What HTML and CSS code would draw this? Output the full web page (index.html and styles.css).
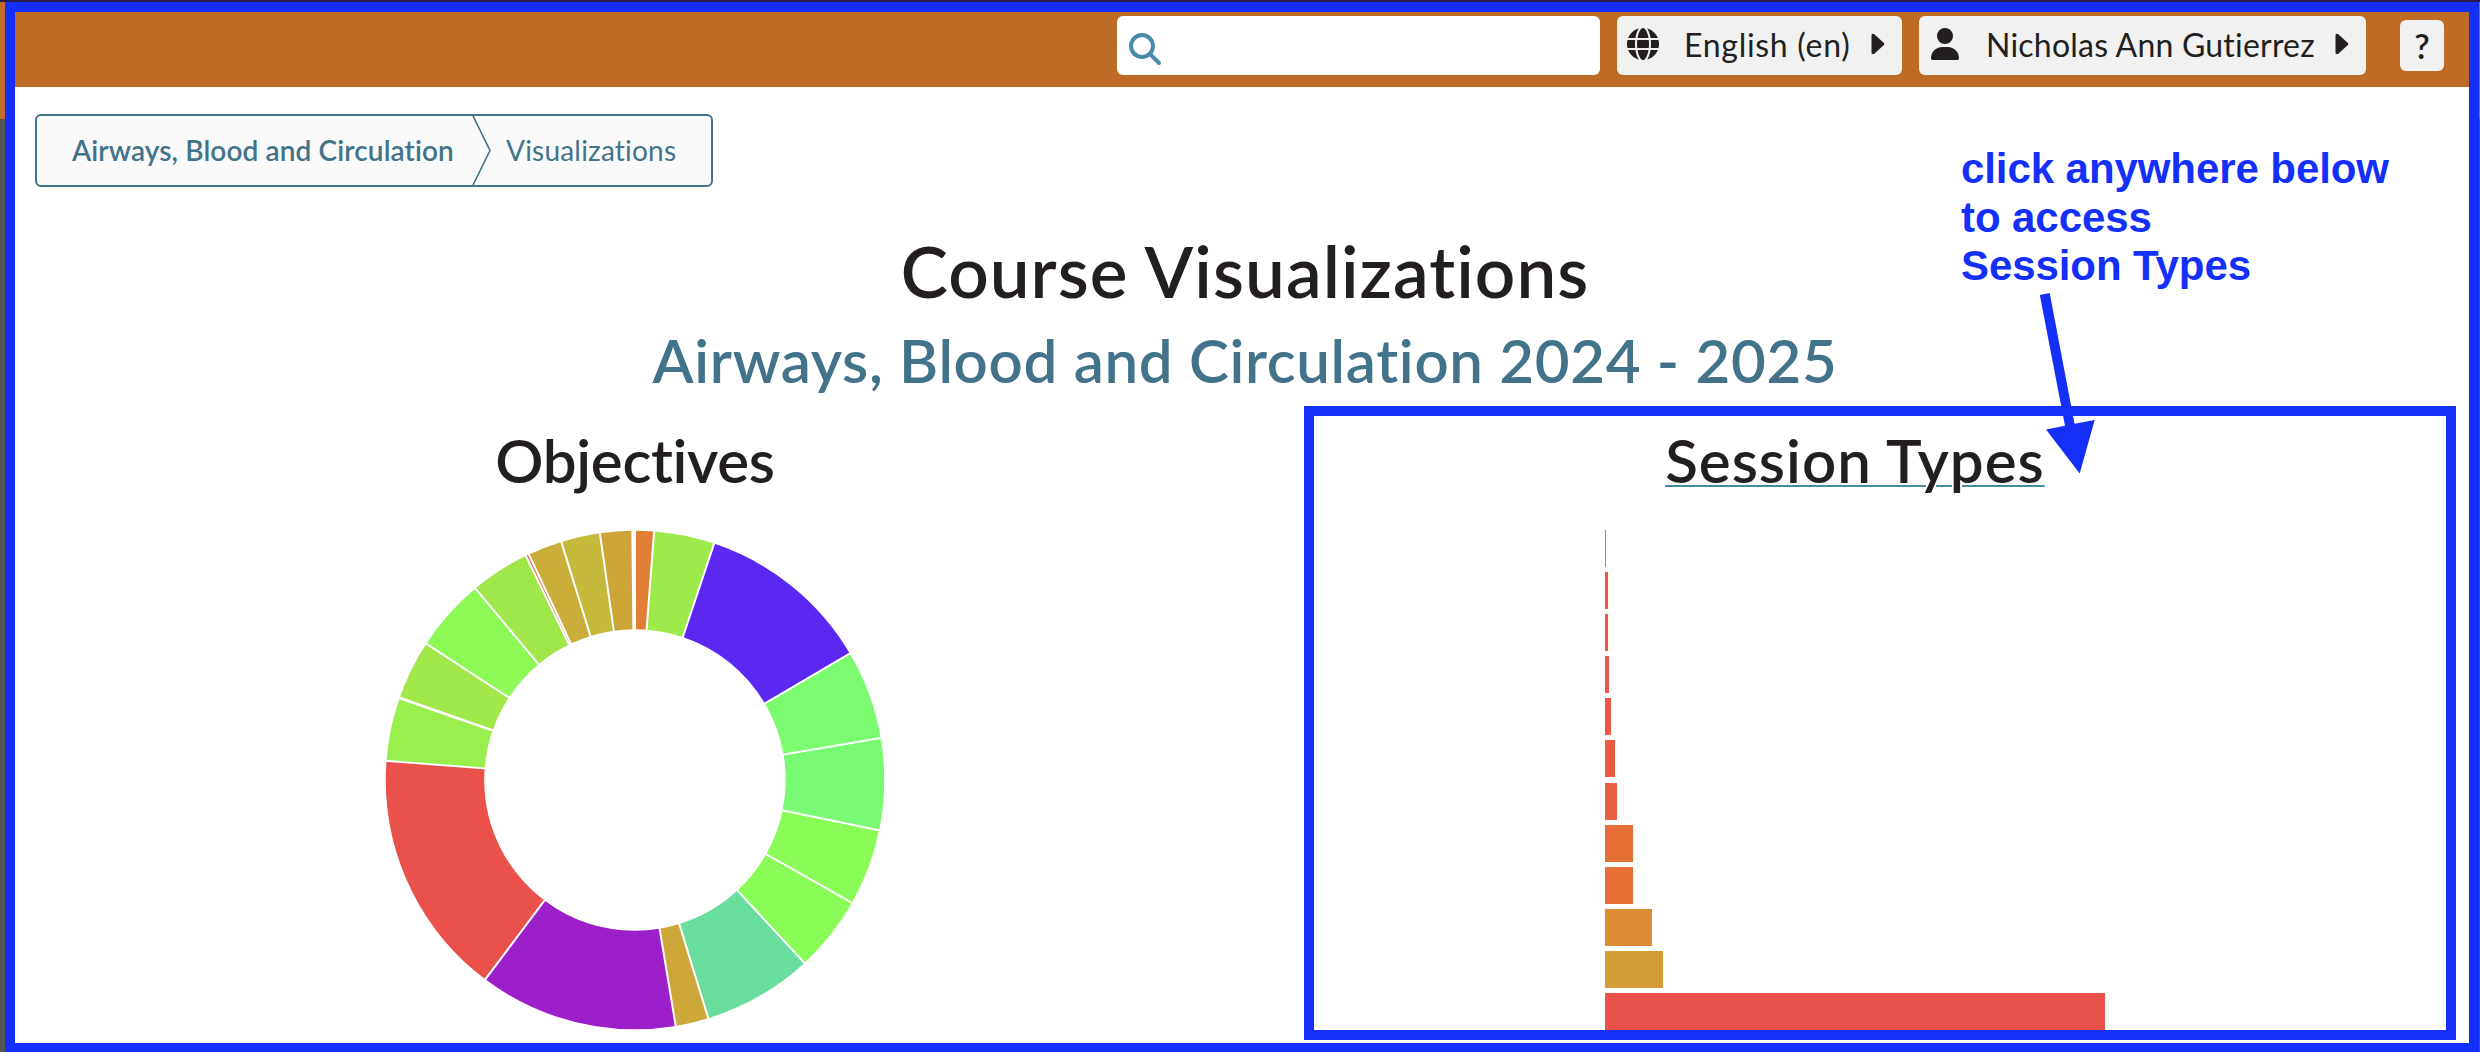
FILE: index.html
```html
<!DOCTYPE html>
<html lang="en">
<head>
<meta charset="utf-8">
<title>Course Visualizations</title>
<link rel="stylesheet" href="styles.css">
</head>
<body>
<div class="window">
<div class="app">
  <header class="topbar">
    <div class="search">
      <svg width="32" height="32" viewBox="0 0 512 512"><path fill="#4a8aa8" d="M416 208c0 45.900-14.900 88.300-40 122.700L502.600 457.400c12.500 12.500 12.500 32.800 0 45.300s-32.800 12.500-45.300 0L330.700 376c-34.400 25.200-76.800 40-122.700 40C93.100 416 0 322.900 0 208S93.100 0 208 0S416 93.100 416 208zM208 352a144 144 0 1 0 0-288 144 144 0 1 0 0 288z"/></svg>
    </div>
    <button class="menu language">
      <svg width="32" height="32" viewBox="0 0 512 512"><path fill="#231f20" d="M352 256c0 22.200-1.200 43.600-3.300 64H163.300c-2.200-20.400-3.300-41.800-3.300-64s1.200-43.600 3.300-64H348.700c2.200 20.400 3.300 41.800 3.300 64zm28.800-64H503.900c5.300 20.500 8.100 41.900 8.100 64s-2.800 43.500-8.100 64H380.800c2.100-20.600 3.200-42 3.200-64s-1.100-43.400-3.200-64zm112.600-32H376.700c-10-63.900-29.800-117.400-55.300-151.600c78.300 20.700 142 77.500 171.900 151.600zm-149.100 0H167.700c6.100-36.400 15.500-68.600 27-94.700c10.500-23.600 22.200-40.700 33.500-51.500C239.400 3.200 248.700 0 256 0s16.600 3.200 27.800 13.800c11.300 10.800 23 27.900 33.500 51.500c11.600 26 20.900 58.200 27 94.700zm-209 0H18.600C48.600 85.900 112.200 29.100 190.600 8.400C165.100 42.600 145.300 96.100 135.300 160zM8.100 192H131.200c-2.100 20.600-3.200 42-3.200 64s1.100 43.400 3.200 64H8.100C2.800 299.500 0 278.100 0 256s2.800-43.500 8.100-64zM194.700 446.600c-11.600-26-20.900-58.200-27-94.600H344.300c-6.100 36.400-15.500 68.600-27 94.600c-10.500 23.600-22.200 40.700-33.500 51.500C272.600 508.800 263.300 512 256 512s-16.600-3.200-27.800-13.800c-11.300-10.800-23-27.900-33.500-51.500zM135.300 352c10 63.900 29.800 117.400 55.300 151.600C112.200 482.900 48.600 426.100 18.600 352H135.300zm358.100 0c-30 74.100-93.600 130.900-171.900 151.600c25.500-34.200 45.200-87.700 55.300-151.600H493.400z"/></svg>
      <span class="label">English (en)</span>
      <svg class="caret" width="14" height="22" viewBox="0 0 14 22"><path fill="#231f20" d="M0.500 2.500C0.500 0.500 2.500 0.300 3.600 1.500L12.600 9.800C13.500 10.700 13.500 11.500 12.600 12.300L3.600 20.500C2.500 21.700 0.500 21.300 0.500 19.500Z"/></svg>
    </button>
    <button class="menu user">
      <svg width="28" height="32" viewBox="0 0 448 512"><path fill="#231f20" d="M224 256A128 128 0 1 0 224 0a128 128 0 1 0 0 256zm-45.700 48C79.800 304 0 383.800 0 482.300C0 498.700 13.300 512 29.700 512H418.300c16.400 0 29.700-13.300 29.700-29.700C448 383.800 368.200 304 269.700 304H178.300z"/></svg>
      <span class="label">Nicholas Ann Gutierrez</span>
      <svg class="caret" width="14" height="22" viewBox="0 0 14 22"><path fill="#231f20" d="M0.500 2.500C0.500 0.500 2.500 0.300 3.600 1.500L12.600 9.800C13.500 10.700 13.500 11.500 12.600 12.300L3.600 20.500C2.500 21.700 0.500 21.300 0.500 19.500Z"/></svg>
    </button>
    <button class="help">?</button>
  </header>

  <nav class="crumbs">
    <span class="crumb course">Airways, Blood and Circulation</span>
    <svg class="divider" width="20" height="69" viewBox="0 0 20 69"><path fill="none" stroke="#42738b" stroke-width="1.600" d="M1 0L18 34.500L1 69"/></svg>
    <span class="crumb current">Visualizations</span>
  </nav>

  <main>
    <h1>Course Visualizations</h1>
    <h2>Airways, Blood and Circulation 2024 - 2025</h2>
    <div class="charts">
      <section class="chart">
        <h3><span class="objectives">Objectives</span></h3>
        <svg class="donut" width="500" height="500" viewBox="-250 -250 500 500">
          <g class="slices" transform="rotate(-90)">
            <circle r="200" pathLength="360" stroke="#e07f35" stroke-dasharray="4.400 360"/>
            <circle r="200" pathLength="360" stroke="#9eea4b" stroke-dasharray="14.100 360" stroke-dashoffset="-4.400"/>
            <circle r="200" pathLength="360" stroke="#5a28f0" stroke-dasharray="41 360" stroke-dashoffset="-18.500"/>
            <circle r="200" pathLength="360" stroke="#7dfb70" stroke-dasharray="20.800 360" stroke-dashoffset="-59.500"/>
            <circle r="200" pathLength="360" stroke="#7af975" stroke-dasharray="21.350 360" stroke-dashoffset="-80.300"/>
            <circle r="200" pathLength="360" stroke="#89fc58" stroke-dasharray="17.850 360" stroke-dashoffset="-101.650"/>
            <circle r="200" pathLength="360" stroke="#8afc57" stroke-dasharray="17.700 360" stroke-dashoffset="-119.500"/>
            <circle r="200" pathLength="360" stroke="#68dd9d" stroke-dasharray="25.700 360" stroke-dashoffset="-137.200"/>
            <circle r="200" pathLength="360" stroke="#cda739" stroke-dasharray="7.700 360" stroke-dashoffset="-162.900"/>
            <circle r="200" pathLength="360" stroke="#9d1fc9" stroke-dasharray="46.300 360" stroke-dashoffset="-170.600"/>
            <circle r="200" pathLength="360" stroke="#eb514b" stroke-dasharray="57.500 360" stroke-dashoffset="-216.900"/>
            <circle r="200" pathLength="360" stroke="#99ef4d" stroke-dasharray="14.700 360" stroke-dashoffset="-274.400"/>
            <circle r="200" pathLength="360" stroke="#a1e84b" stroke-dasharray="14.050 360" stroke-dashoffset="-289.100"/>
            <circle r="200" pathLength="360" stroke="#8df956" stroke-dasharray="17.050 360" stroke-dashoffset="-303.150"/>
            <circle r="200" pathLength="360" stroke="#a0e84a" stroke-dasharray="13.850 360" stroke-dashoffset="-320.200"/>
            <circle r="200" pathLength="360" stroke="#eb5a48" stroke-dasharray="0.750 360" stroke-dashoffset="-334.050"/>
            <circle r="200" pathLength="360" stroke="#cbad39" stroke-dasharray="8 360" stroke-dashoffset="-334.800"/>
            <circle r="200" pathLength="360" stroke="#c4b93b" stroke-dasharray="9.100 360" stroke-dashoffset="-342.800"/>
            <circle r="200" pathLength="360" stroke="#cea539" stroke-dasharray="7.500 360" stroke-dashoffset="-351.900"/>
          </g>
          <g class="gaps">
            <path d="M0 -145V-255"/>
            <path d="M0 -145V-255" transform="rotate(4.400)"/>
            <path d="M0 -145V-255" transform="rotate(18.500)"/>
            <path d="M0 -145V-255" transform="rotate(59.500)"/>
            <path d="M0 -145V-255" transform="rotate(80.300)"/>
            <path d="M0 -145V-255" transform="rotate(101.650)"/>
            <path d="M0 -145V-255" transform="rotate(119.500)"/>
            <path d="M0 -145V-255" transform="rotate(137.200)"/>
            <path d="M0 -145V-255" transform="rotate(162.900)"/>
            <path d="M0 -145V-255" transform="rotate(170.600)"/>
            <path d="M0 -145V-255" transform="rotate(216.900)"/>
            <path d="M0 -145V-255" transform="rotate(274.400)"/>
            <path d="M0 -145V-255" transform="rotate(289.100)"/>
            <path d="M0 -145V-255" transform="rotate(289.300)"/>
            <path d="M0 -145V-255" transform="rotate(303.150)"/>
            <path d="M0 -145V-255" transform="rotate(320.200)"/>
            <path d="M0 -145V-255" transform="rotate(334.050)"/>
            <path d="M0 -145V-255" transform="rotate(334.800)"/>
            <path d="M0 -145V-255" transform="rotate(342.800)"/>
            <path d="M0 -145V-255" transform="rotate(351.900)"/>
            <path d="M0 -145V-255" transform="rotate(359.400)"/>
          </g>
        </svg>
      </section>
      <section class="chart">
        <h3><span class="types">Session Types</span></h3>
        <svg class="bars" width="500" height="500" viewBox="0 0 500 500" shape-rendering="crispEdges">
          <rect y="0" width="1" height="37" fill="#ee6b63"/>
          <rect y="42" width="3" height="37" fill="#eb5548"/>
          <rect y="84" width="3" height="37" fill="#eb5548"/>
          <rect y="126" width="4" height="37" fill="#eb5647"/>
          <rect y="168" width="6" height="37" fill="#ee5745"/>
          <rect y="210" width="10" height="37" fill="#ea5c41"/>
          <rect y="253" width="12" height="37" fill="#e95e40"/>
          <rect y="295" width="28" height="37" fill="#e57036"/>
          <rect y="337" width="28" height="37" fill="#e57036"/>
          <rect y="379" width="47" height="37" fill="#dc8a34"/>
          <rect y="421" width="58" height="37" fill="#d49c38"/>
          <rect y="463" width="500" height="37" fill="#eb514b"/>
        </svg>
      </section>
    </div>
  </main>
</div>
<div class="highlight"></div>
<p class="note">click anywhere below<br>to access<br>Session Types</p>
<svg class="arrow" width="70" height="190" viewBox="2035 290 70 190"><path fill="#1430f8" d="M2039.800 295L2049.700 293L2074.500 423.700L2094.700 420L2079.700 473.500L2046 429.500L2065 425.800Z"/></svg>
</div>
</body>
</html>
```
FILE: styles.css
```css
* { box-sizing: border-box; }
body {
  margin: 0;
  overflow: hidden;
  font-family: Lato, "Open Sans", sans-serif;
  font-variant-ligatures: none;
  color: #231f20;
}
.window {
  position: relative;
  height: 1052px;
  overflow: hidden;
  padding: 2px 1px 0 5px;
  background: linear-gradient(#241c4a 2px, #c06c26 2px 119px, #555 119px);
}
.app {
  height: 1051px;
  border: 10px solid #1430f8;
  background: #fff;
}
.topbar {
  height: 75px;
  padding: 4px 25px 0 0;
  display: flex;
  justify-content: flex-end;
  align-items: flex-start;
  background: #be6b26;
}
.search {
  width: 483px;
  height: 59px;
  margin-right: 17px;
  padding: 17px 12px;
  border-radius: 6px;
  background: #fff;
}
.menu, .help {
  border: 0;
  border-radius: 6px;
  background: #f1f1f1;
  color: #231f20;
  font-family: inherit;
}
.menu {
  height: 59px;
  display: flex;
  align-items: flex-start;
  padding: 12px 0 0 10px;
}
.menu .label {
  font-size: 32px;
  line-height: 36px;
  margin-top: -1px;
  white-space: nowrap;
  text-align: left;
}
.caret { margin-top: 5px; }
.language { width: 285px; margin-right: 17px; }
.language .label { width: 187px; margin-left: 25px; letter-spacing: 0.700px; }
.user { width: 447px; margin-right: 34px; padding-left: 12px; }
.user .label { width: 349px; margin-left: 27px; letter-spacing: 0.220px; }
.help {
  width: 44px;
  height: 51px;
  margin-top: 4px;
  padding: 0;
  font-size: 34px;
  line-height: 47px;
  font-weight: 600;
}
.crumbs {
  display: flex;
  width: 678px;
  height: 73px;
  margin: 27px 0 0 20px;
  border: 2px solid #42738b;
  border-radius: 6px;
  background: #fafafa;
  color: #42738b;
  font-size: 28px;
  line-height: 69px;
  white-space: nowrap;
}
.crumb { letter-spacing: 0.120px; }
.course { width: 400px; margin-left: 35px; font-weight: 600; }
.divider { flex: none; }
.current { margin-left: 14px; letter-spacing: 0.200px; }
h1, h2, h3 { margin: 0; font-weight: 600; text-align: center; white-space: nowrap; }
h1 { margin-top: 41px; font-size: 71px; line-height: 86px; letter-spacing: 1.050px; }
h2 { margin-top: 10px; font-size: 60px; line-height: 72px; color: #42738b; letter-spacing: 0.680px; }
h3 { font-size: 60px; line-height: 72px; }
main { margin: 0 4px 0 10px; }
.charts { display: flex; margin-top: 28px; }
.chart { flex: 1; display: flex; flex-direction: column; align-items: center; }
.objectives { letter-spacing: -0.300px; }
.types {
  letter-spacing: 1px;
  text-decoration: underline 2px #468aa5;
  text-underline-offset: 2px;
}
.donut, .bars { margin-top: 34px; }
.slices circle { fill: none; stroke-width: 98.5; }
.gaps path { stroke: #fff; stroke-width: 2; }
.highlight {
  position: absolute;
  left: 1304px;
  top: 406px;
  width: 1152px;
  height: 634px;
  border: 10px solid #1430f8;
}
.note {
  position: absolute;
  left: 1961px;
  top: 145px;
  margin: 0;
  color: #1430f8;
  font: bold 42px/48.500px "Liberation Sans", Arial, sans-serif;
  letter-spacing: -0.080px;
  white-space: nowrap;
}
.arrow { position: absolute; left: 2035px; top: 290px; }
```
